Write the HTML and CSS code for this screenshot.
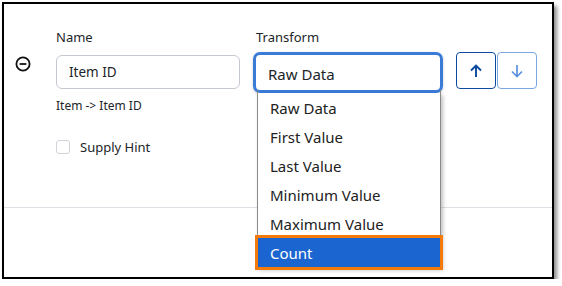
FILE: index.html
```html
<!DOCTYPE html>
<html lang="en">
<head>
    <meta charset="UTF-8">
    <meta name="viewport" content="width=device-width, initial-scale=1.0">
    <title>Field mapping</title>
    <link rel="stylesheet" href="styles.css">
</head>
<body>
    <div class="frame">
        <div class="mapping-row">
            <div class="remove-col">
                <svg class="remove-icon" width="16" height="16" viewBox="0 0 16 16">
                    <circle cx="8" cy="8" r="6.6" fill="none" stroke="#111" stroke-width="1.8"/>
                    <line x1="4.6" y1="8" x2="11.4" y2="8" stroke="#111" stroke-width="1.8"/>
                </svg>
            </div>

            <div class="field-col">
                <label class="field-label">Name</label>
                <div class="text-input">Item ID</div>
                <div class="hint">Item -&gt; Item ID</div>
                <label class="check">
                    <span class="check-box"></span>
                    <span>Supply Hint</span>
                </label>
            </div>

            <div class="field-col">
                <label class="field-label">Transform</label>
                <div class="select-wrap">
                    <div class="select-box">Raw Data</div>
                    <ul class="dropdown">
                        <li>Raw Data</li>
                        <li>First Value</li>
                        <li>Last Value</li>
                        <li>Minimum Value</li>
                        <li>Maximum Value</li>
                        <li class="selected">Count</li>
                    </ul>
                </div>
            </div>

            <div class="move-buttons">
                <button class="move-btn up">
                    <svg width="16" height="16" viewBox="0 0 16 16">
                        <path d="M8 14V2.5M3 7.5L8 2.5L13 7.5" fill="none" stroke="#0b4a9e" stroke-width="1.9"/>
                    </svg>
                </button>
                <button class="move-btn down">
                    <svg width="16" height="16" viewBox="0 0 16 16">
                        <path d="M8 2V13.5M3 8.5L8 13.5L13 8.5" fill="none" stroke="#5b92dc" stroke-width="1.7"/>
                    </svg>
                </button>
            </div>
        </div>
    </div>
</body>
</html>
```

FILE: styles.css
```css
body {
    margin: 0;
    font-family: "Noto Sans", "Open Sans", sans-serif;
    color: #212529;
    background: #fff;
}
.frame {
    margin: 2px 0 0 2px;
    width: 548px;
    height: 273px;
    border: 2px solid #000;
    box-shadow: 3px 4px 4px rgba(0, 0, 0, 0.45);
}
.mapping-row {
    display: flex;
    gap: 16px;
    height: 203px;
    border-bottom: 1px solid #dde1e6;
}
.remove-col {
    width: 25px;
    padding: 51px 0 0 11px;
}
.field-col {
    width: 184px;
    padding-top: 24px;
}
.field-label {
    display: block;
    font-size: 13px;
    line-height: 18px;
    margin-bottom: 9px;
}
.text-input {
    height: 32px;
    border: 1px solid #c4c9cf;
    border-radius: 6px;
    padding-left: 12px;
    font-size: 13.5px;
    line-height: 33px;
}
.hint {
    font-size: 12px;
    margin-top: 9px;
    line-height: 16px;
}
.check {
    display: flex;
    align-items: center;
    gap: 10px;
    margin-top: 24px;
    font-size: 13px;
}
.check-box {
    width: 12px;
    height: 12px;
    border: 1px solid #d0d4d9;
    border-radius: 3px;
}
.select-wrap {
    position: relative;
}
.select-box {
    height: 35px;
    margin: -3px;
    border: 3px solid #3a7bd8;
    border-radius: 7px;
    padding-left: 12px;
    font-size: 15px;
    line-height: 38px;
    box-shadow: 0 1px 3px rgba(0, 0, 0, 0.2);
}
.dropdown {
    position: absolute;
    left: 1px;
    top: 41px;
    width: 182px;
    margin: 0;
    padding: 0;
    list-style: none;
    background: #fff;
    border: 1px solid #8a8a8a;
    border-top: none;
    box-shadow: 2px 2px 4px rgba(0, 0, 0, 0.25);
}
.dropdown::before {
    content: "";
    position: absolute;
    left: -1px;
    right: -1px;
    top: -3px;
    height: 3px;
    border-left: 1px solid #8a8a8a;
    border-right: 1px solid #8a8a8a;
}
.dropdown li {
    height: 29px;
    line-height: 30px;
    padding-left: 12px;
    font-size: 15px;
    color: #222;
}
.dropdown li.selected {
    background: #1a65d0;
    color: #fff;
    outline: 3px solid #f47b0a;
}
.move-buttons {
    display: flex;
    padding-top: 48px;
    height: 37px;
}
.move-btn {
    width: 40px;
    height: 37px;
    padding: 0;
    background: #fff;
    border-radius: 4px;
    display: flex;
    align-items: center;
    justify-content: center;
    cursor: pointer;
}
.move-btn.up {
    border: 1px solid #0b4a9e;
}
.move-btn.down {
    border: 1px solid #7ba6e2;
    margin-left: 1px;
}
```
